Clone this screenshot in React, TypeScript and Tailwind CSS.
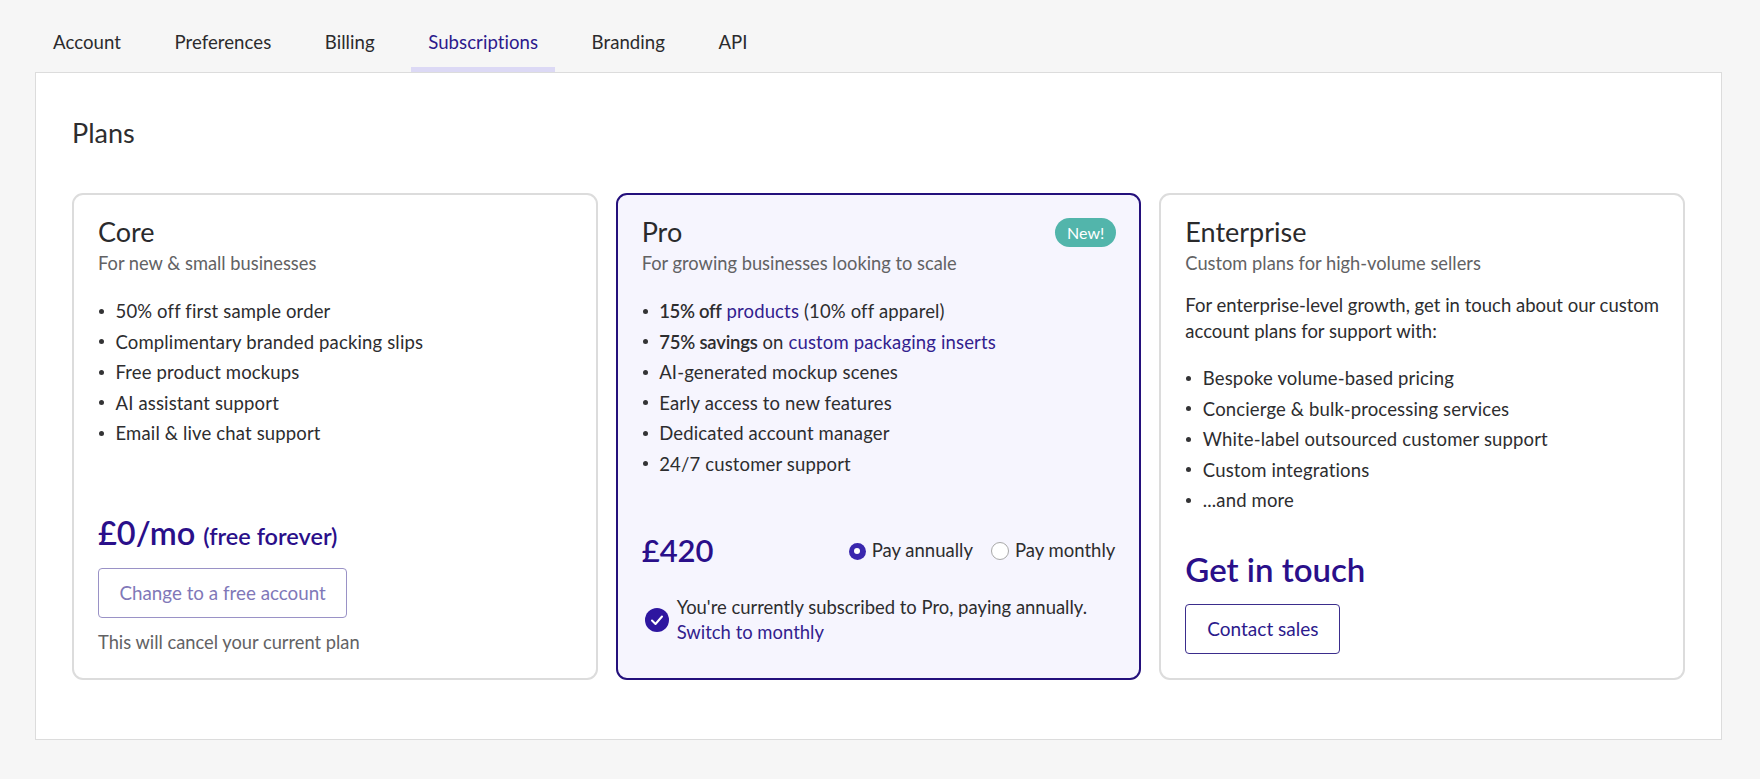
import type { ReactNode } from 'react';

const tabs = ['Account', 'Preferences', 'Billing', 'Subscriptions', 'Branding', 'API'];

function Bullets({ items }: { items: ReactNode[] }) {
  return (
    <ul className="flex flex-col gap-[6.6px] text-[18.5px] leading-[24px] tracking-[0.15px] text-[#2d2d2f]">
      {items.map((item, i) => (
        <li key={i} className="flex items-center">
          <span className="mr-[11.5px] ml-[1px] h-[5px] w-[5px] shrink-0 rounded-full bg-[#333335]" />
          <span>{item}</span>
        </li>
      ))}
    </ul>
  );
}

function Card({ title, subtitle, active, children }: { title: string; subtitle: string; active?: boolean; children: ReactNode }) {
  return (
    <div
      className={
        active
          ? 'relative flex h-[487px] flex-1 flex-col rounded-[11px] border-2 border-[#24107c] bg-[#f6f5fe] px-[24px] pt-[20px]'
          : 'relative flex h-[487px] flex-1 flex-col rounded-[11px] border-2 border-[#dcdcdc] bg-white px-[24px] pt-[20px]'
      }
    >
      <h3 className="text-[27px] leading-[34px] font-normal text-[#2a2a2c]">{title}</h3>
      <p className="mt-[2px] text-[18.3px] leading-[24px] text-[#626264]">{subtitle}</p>
      {children}
    </div>
  );
}

export default function App() {
  return (
    <div className="h-[779px] bg-[#f6f6f6] pt-[20px] pr-[38px] pl-[35px] font-['Lato',sans-serif]">
      <div className="ml-[1px] flex gap-[19.5px]">
        {tabs.map((tab) =>
          tab === 'Subscriptions' ? (
            <div key={tab} className="border-b-[5px] border-[#dcd9f5] px-[17px] pt-[9px] pb-[12px] text-[18.6px] leading-[26px] tracking-[0.05px] text-[#2c1a8c]">
              {tab}
            </div>
          ) : (
            <div key={tab} className="border-b-[5px] border-transparent px-[17px] pt-[9px] pb-[12px] text-[18.6px] leading-[26px] tracking-[0.05px] text-[#2b2b2d]">
              {tab}
            </div>
          ),
        )}
      </div>
      <div className="h-[668px] border border-[#dcdcdc] bg-white pt-[43px] pr-[36px] pl-[36px]">
        <h2 className="text-[27px] leading-[34px] font-normal text-[#2d2d2f]">Plans</h2>
        <div className="mt-[43px] flex gap-[18px]">
          <Card title="Core" subtitle="For new & small businesses">
            <div className="mt-[24px]">
              <Bullets
                items={[
                  '50% off first sample order',
                  'Complimentary branded packing slips',
                  'Free product mockups',
                  'AI assistant support',
                  'Email & live chat support',
                ]}
              />
            </div>
            <div className="mt-auto pb-[24px]">
              <p className="font-semibold text-[#2a0f8a]">
                <span className="text-[32.5px] leading-[40px]">£0/mo</span>
                <span className="ml-[8px] text-[23.5px]">(free forever)</span>
              </p>
              <button className="mt-[14px] block h-[50px] rounded-[4px] border border-[#9a92c6] px-[20.5px] text-[18.8px] text-[#8078b8]">
                Change to a free account
              </button>
              <p className="mt-[12px] text-[18.3px] leading-[24px] text-[#626264]">This will cancel your current plan</p>
            </div>
          </Card>
          <Card title="Pro" subtitle="For growing businesses looking to scale" active>
            <span className="absolute top-[23px] right-[23px] rounded-full bg-[#52b5ab] px-[12px] py-[3px] text-[16px] leading-[23px] text-white">
              New!
            </span>
            <div className="mt-[24px]">
              <Bullets
                items={[
                  <>
                    <span className="font-semibold tracking-[-0.3px]">15% off</span> <span className="text-[#32218e]">products</span> (10% off apparel)
                  </>,
                  <>
                    <span className="font-semibold tracking-[-0.2px]">75% savings</span> on <span className="text-[#32218e]">custom packaging inserts</span>
                  </>,
                  'AI-generated mockup scenes',
                  'Early access to new features',
                  'Dedicated account manager',
                  '24/7 customer support',
                ]}
              />
            </div>
            <div className="mt-auto pb-[33px]">
              <div className="flex items-center justify-between">
                <span className="text-[31px] leading-[40px] font-semibold text-[#2a0f8a]">£420</span>
                <div className="flex items-center pt-[2px] text-[18.5px] text-[#2d2d2f]">
                  <span className="mr-[6px] flex h-[17px] w-[17px] items-center justify-center rounded-full bg-[#3a27ae]">
                    <span className="h-[6px] w-[6px] rounded-full bg-white" />
                  </span>
                  Pay annually
                  <span className="mr-[6px] ml-[18px] h-[18px] w-[18px] rounded-full border border-[#a8a8a8] bg-white" />
                  Pay monthly
                </div>
              </div>
              <div className="mt-[25px] flex items-center pl-[3px] text-[18.45px] leading-[25px]">
                <svg viewBox="0 0 24 24" className="mr-[8px] h-[24px] w-[24px] shrink-0">
                  <circle cx="12" cy="12" r="12" fill="#2e16a0" />
                  <path d="M7 12.5l3.5 3.5L17 8.5" fill="none" stroke="#fff" strokeWidth="2" strokeLinecap="round" strokeLinejoin="round" />
                </svg>
                <p className="text-[#2d2d2f]">
                  You're currently subscribed to Pro, paying annually.
                  <br />
                  <span className="text-[#32218e]">Switch to monthly</span>
                </p>
              </div>
            </div>
          </Card>
          <Card title="Enterprise" subtitle="Custom plans for high-volume sellers">
            <p className="mt-[17px] text-[18.5px] leading-[26px] whitespace-nowrap text-[#2d2d2f]">
              For enterprise-level growth, get in touch about our custom
              <br />
              account plans for support with:
            </p>
            <div className="mt-[22px]">
              <Bullets
                items={[
                  'Bespoke volume-based pricing',
                  'Concierge & bulk-processing services',
                  'White-label outsourced customer support',
                  'Custom integrations',
                  '...and more',
                ]}
              />
            </div>
            <div className="mt-auto pb-[24px]">
              <p className="text-[33px] leading-[42px] font-semibold text-[#2a0f8a]">Get in touch</p>
              <button className="mt-[14px] block h-[50px] rounded-[4px] border border-[#3b2d8c] px-[21px] text-[19px] text-[#2c1a8c]">
                Contact sales
              </button>
            </div>
          </Card>
        </div>
      </div>
    </div>
  );
}
